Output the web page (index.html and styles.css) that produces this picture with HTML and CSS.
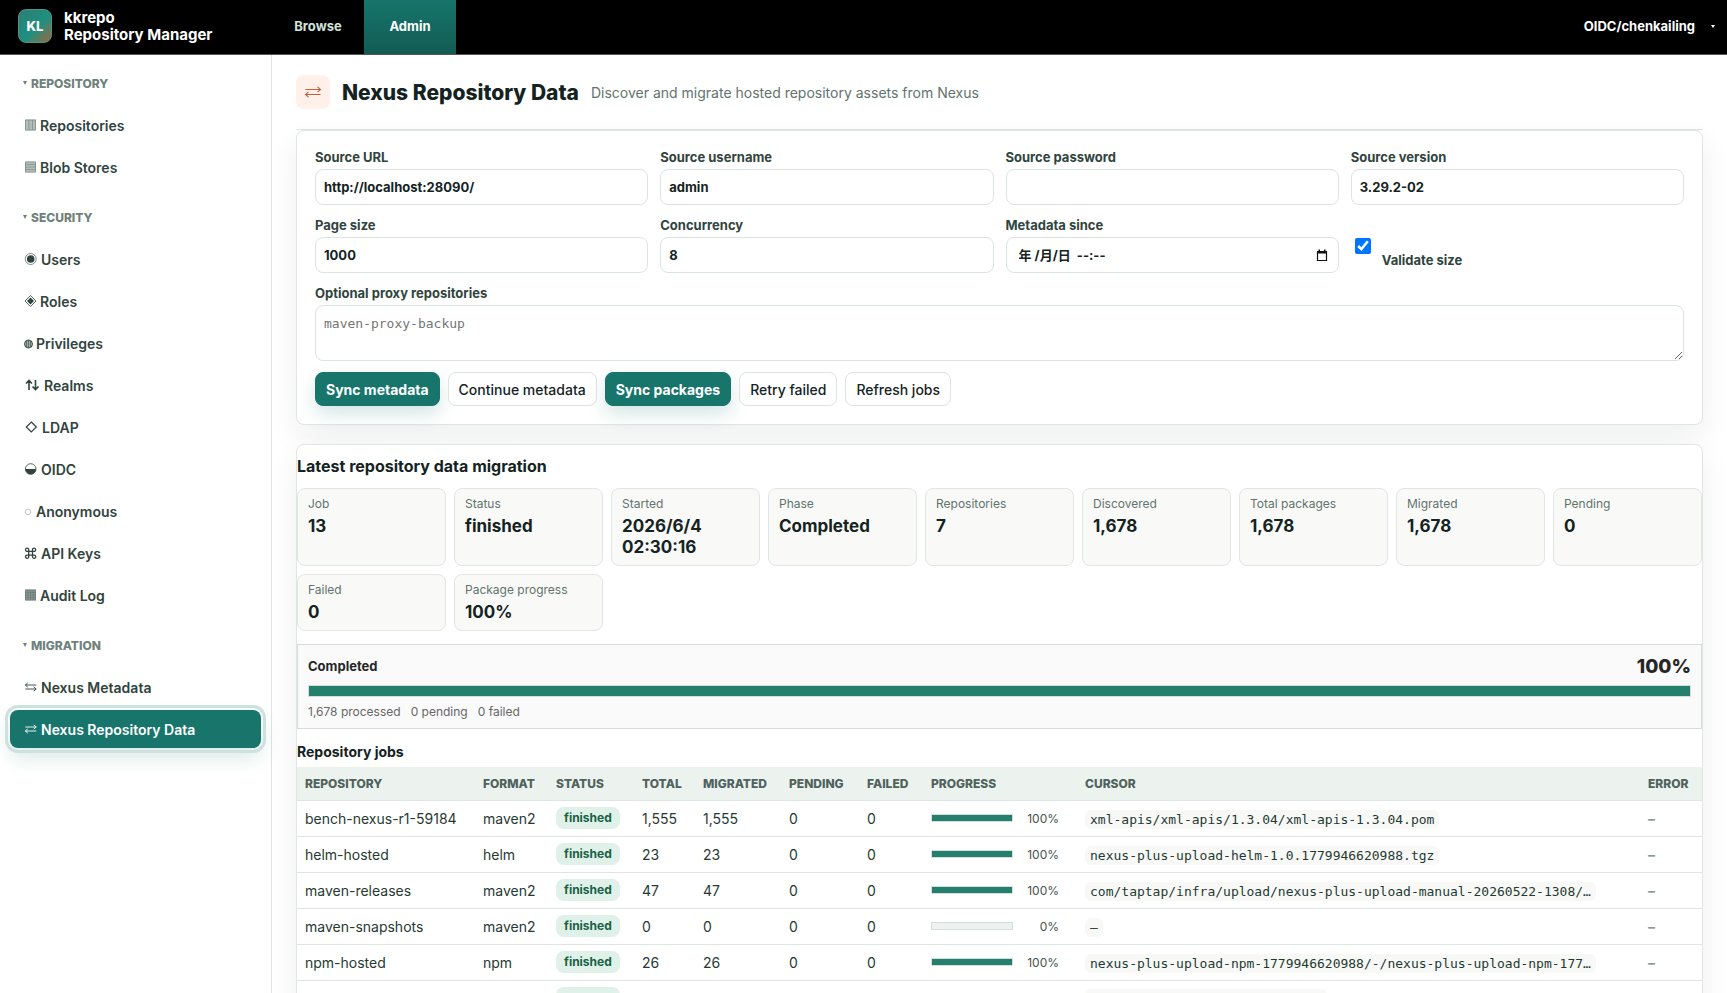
FILE: index.html
```html
<!DOCTYPE html>
<html lang="en">
<head>
<meta charset="utf-8">
<title>kkrepo Repository Manager</title>
<link rel="stylesheet" href="styles.css">
</head>
<body>
<header class="topbar">
  <div class="brand">
    <span class="logo">KL</span>
    <span class="brand-name">kkrepo<br>Repository Manager</span>
  </div>
  <nav class="tabs">
    <a class="tab" href="#browse">Browse</a>
    <a class="tab tab-active" href="#admin">Admin</a>
  </nav>
  <button class="user" type="button">OIDC/chenkailing
    <svg class="user-caret" viewBox="0 0 4 4"><path d="M0 1h4L2 4z" fill="currentColor"/></svg>
  </button>
</header>
<div class="shell">
  <nav class="sidebar">
    <section class="group">
      <h2 class="group-title"><svg class="caret" viewBox="0 0 4 4"><path d="M0 0h4L2 4z" fill="currentColor"/></svg>REPOSITORY</h2>
      <a class="item" href="#repositories"><svg class="icon w12" viewBox="0 0 12 12"><path d="M1 .5h11v11H1z" fill="#b3beba"/><path d="M1.500 1h10v10h-10zM5 1v10M8.500 1v10" fill="none" stroke="#82918c" stroke-width=".8"/></svg>Repositories</a>
      <a class="item" href="#blobs"><svg class="icon w12" viewBox="0 0 12 12"><path d="M1 .5h11v11H1z" fill="#b3beba"/><path d="M1.500 1h10v10h-10zM1 3.500h11M1 6h11M1 8.500h11" fill="none" stroke="#82918c" stroke-width=".8"/></svg>Blob Stores</a>
    </section>
    <section class="group">
      <h2 class="group-title"><svg class="caret" viewBox="0 0 4 4"><path d="M0 0h4L2 4z" fill="currentColor"/></svg>SECURITY</h2>
      <a class="item" href="#users"><svg class="icon w13" viewBox="0 0 13 12"><circle cx="6.700" cy="6" r="5.500" fill="none" stroke="currentColor" stroke-width=".6"/><circle cx="6.700" cy="6" r="3.800" fill="currentColor"/></svg>Users</a>
      <a class="item" href="#roles"><svg class="icon w12" viewBox="0 0 12 12"><path d="M6.500.500 12 6l-5.500 5.500L1 6z" fill="none" stroke="currentColor" stroke-width=".8"/><path d="M6.500 2.500 10 6 6.500 9.500 3 6z" fill="currentColor"/></svg>Roles</a>
      <a class="item" href="#privileges"><svg class="icon w8" viewBox="0 0 8 12"><circle cx="4.500" cy="7" r="4" fill="#a3afab" stroke="currentColor" stroke-width=".9"/><path d="M2.500 4v6M4.500 3v8M6.500 4v6" stroke="currentColor" stroke-width=".6"/></svg>Privileges</a>
      <a class="item" href="#realms"><svg class="icon w16" viewBox="0 0 16 12"><path d="M5 11V1.500M2 4.500l3-3 3 3M11.500 1v9.500M8.500 7.500l3 3 3-3" fill="none" stroke="currentColor" stroke-width="1.600"/></svg>Realms</a>
      <a class="item" href="#ldap"><svg class="icon w14" viewBox="0 0 14 12"><path d="M7.300 1 12.300 6l-5 5-5-5z" fill="none" stroke="currentColor" stroke-width="1.200"/></svg>LDAP</a>
      <a class="item" href="#oidc"><svg class="icon w13" viewBox="0 0 13 12"><circle cx="6.700" cy="6" r="5.300" fill="none" stroke="currentColor" stroke-width=".8"/><path d="M1.400 6h10.600a5.300 5.300 0 0 1-10.600 0z" fill="currentColor"/></svg>OIDC</a>
      <a class="item" href="#anonymous"><svg class="icon w8" viewBox="0 0 8 12"><circle cx="4" cy="7" r="2.800" fill="none" stroke="#b5bfbc" stroke-width=".9"/></svg>Anonymous</a>
      <a class="item" href="#keys"><svg class="icon w13" viewBox="0 0 13 12"><path d="M4.700 4.300v3.900M8.500 4.300v3.900M4.700 4.300h3.800M4.700 8.100h3.800M4.700 4.300H3.200a1.600 1.600 0 1 1 1.500-1.600zM8.500 4.300h1.500a1.600 1.600 0 1 0-1.500-1.600zM4.700 8.100H3.200a1.600 1.600 0 1 0 1.500 1.600zM8.500 8.100h1.500a1.600 1.600 0 1 1-1.500 1.600z" fill="none" stroke="currentColor" stroke-width="1.300"/></svg>API Keys</a>
      <a class="item" href="#audit"><svg class="icon w12" viewBox="0 0 12 12"><path d="M1 .5h11v11H1z" fill="#8b9995"/><path d="M1.500 1h10v10h-10zM4 1v10M6.500 1v10M9 1v10M1 3.500h11M1 6h11M1 8.500h11" fill="none" stroke="#65766f" stroke-width=".6"/></svg>Audit Log</a>
    </section>
    <section class="group">
      <h2 class="group-title"><svg class="caret" viewBox="0 0 4 4"><path d="M0 0h4L2 4z" fill="currentColor"/></svg>MIGRATION</h2>
      <a class="item" href="#metadata"><svg class="icon w13" viewBox="0 0 13 12"><path d="M1.300 4h11M3.800 1.800 1.300 4l2.500 2.200M12 8H1.300M9.700 5.800 12.200 8l-2.500 2.200" fill="none" stroke="currentColor" stroke-width=".9"/></svg>Nexus Metadata</a>
      <a class="item item-active" href="#data"><svg class="icon w13" viewBox="0 0 13 12"><path d="M1.300 4h10.800M9.700 1.800 12.200 4 9.700 6.200M12.300 8H1.300M3.800 5.800 1.300 8l2.500 2.200" fill="none" stroke="currentColor" stroke-width=".9"/></svg>Nexus Repository Data</a>
    </section>
  </nav>
  <main class="main">
    <div class="page-head">
      <span class="page-icon"><svg viewBox="0 0 18 12"><path d="M1.500 3.500h15M13.500.800l3 2.700-3 2.700M16.500 8.500h-15M4.500 5.800l-3 2.700 3 2.700" fill="none" stroke="currentColor" stroke-width="1.100"/></svg></span>
      <h1 class="page-title">Nexus Repository Data</h1>
      <p class="page-sub">Discover and migrate hosted repository assets from Nexus</p>
    </div>
    <form class="card form">
      <div class="fields">
        <label class="field">Source URL<input class="box" type="text" value="http://localhost:28090/"></label>
        <label class="field">Source username<input class="box" type="text" value="admin"></label>
        <label class="field">Source password<input class="box" type="password"></label>
        <label class="field">Source version<input class="box" type="text" value="3.29.2-02"></label>
        <label class="field">Page size<input class="box" type="text" value="1000"></label>
        <label class="field">Concurrency<input class="box" type="text" value="8"></label>
        <div class="field">
          <label for="since">Metadata since</label>
          <div class="box date-box">
            <input class="date-text" id="since" type="text" value="年 /月/日  --:--">
            <button class="date-btn" type="button" aria-label="Open calendar"><svg viewBox="0 0 12 13"><path d="M1.500 3h9v8.500h-9z" fill="none" stroke="#111" stroke-width="1.200"/><path d="M1 2h10v2.500H1zM2.500.500h1.500V2H2.500zM8 .5h1.500V2H8z" fill="#111"/></svg></button>
          </div>
        </div>
        <div class="check">
          <input class="check-box" id="validate" type="checkbox" checked>
          <label class="check-label" for="validate">Validate size</label>
        </div>
        <label class="field field-wide">Optional proxy repositories<textarea class="box area" placeholder="maven-proxy-backup"></textarea></label>
      </div>
      <div class="actions">
        <button class="btn btn-primary" type="button">Sync metadata</button>
        <button class="btn" type="button">Continue metadata</button>
        <button class="btn btn-primary" type="button">Sync packages</button>
        <button class="btn" type="button">Retry failed</button>
        <button class="btn" type="button">Refresh jobs</button>
      </div>
    </form>
    <section class="card report">
      <h2 class="report-title">Latest repository data migration</h2>
      <div class="stats">
        <div class="stat"><span class="stat-label">Job</span><strong class="stat-value">13</strong></div>
        <div class="stat"><span class="stat-label">Status</span><strong class="stat-value">finished</strong></div>
        <div class="stat"><span class="stat-label">Started</span><strong class="stat-value">2026/6/4 02:30:16</strong></div>
        <div class="stat"><span class="stat-label">Phase</span><strong class="stat-value">Completed</strong></div>
        <div class="stat"><span class="stat-label">Repositories</span><strong class="stat-value">7</strong></div>
        <div class="stat"><span class="stat-label">Discovered</span><strong class="stat-value">1,678</strong></div>
        <div class="stat"><span class="stat-label">Total packages</span><strong class="stat-value">1,678</strong></div>
        <div class="stat"><span class="stat-label">Migrated</span><strong class="stat-value">1,678</strong></div>
        <div class="stat"><span class="stat-label">Pending</span><strong class="stat-value">0</strong></div>
        <div class="stat"><span class="stat-label">Failed</span><strong class="stat-value">0</strong></div>
        <div class="stat"><span class="stat-label">Package progress</span><strong class="stat-value">100%</strong></div>
      </div>
      <div class="progress-box">
        <div class="progress-head"><strong>Completed</strong><strong class="progress-pct">100%</strong></div>
        <div class="bar"><div class="bar-fill" style="width:100%"></div></div>
        <div class="progress-foot"><span>1,678 processed</span><span>0 pending</span><span>0 failed</span></div>
      </div>
      <h3 class="jobs-title">Repository jobs</h3>
      <table class="jobs">
        <colgroup><col class="c-repo"><col class="c-format"><col class="c-status"><col class="c-total"><col class="c-migrated"><col class="c-pending"><col class="c-failed"><col class="c-progress"><col><col class="c-error"></colgroup>
        <thead>
          <tr><th>REPOSITORY</th><th>FORMAT</th><th>STATUS</th><th>TOTAL</th><th>MIGRATED</th><th>PENDING</th><th>FAILED</th><th>PROGRESS</th><th>CURSOR</th><th>ERROR</th></tr>
        </thead>
        <tbody>
          <tr><td>bench-nexus-r1-59184</td><td>maven2</td><td><span class="pill">finished</span></td><td>1,555</td><td>1,555</td><td>0</td><td>0</td><td><div class="meter"><div class="bar bar-small"><div class="bar-fill" style="width:100%"></div></div><span>100%</span></div></td><td><code class="cursor">xml-apis/xml-apis/1.3.04/xml-apis-1.3.04.pom</code></td><td class="none">–</td></tr>
          <tr><td>helm-hosted</td><td>helm</td><td><span class="pill">finished</span></td><td>23</td><td>23</td><td>0</td><td>0</td><td><div class="meter"><div class="bar bar-small"><div class="bar-fill" style="width:100%"></div></div><span>100%</span></div></td><td><code class="cursor">nexus-plus-upload-helm-1.0.1779946620988.tgz</code></td><td class="none">–</td></tr>
          <tr><td>maven-releases</td><td>maven2</td><td><span class="pill">finished</span></td><td>47</td><td>47</td><td>0</td><td>0</td><td><div class="meter"><div class="bar bar-small"><div class="bar-fill" style="width:100%"></div></div><span>100%</span></div></td><td><code class="cursor">com/taptap/infra/upload/nexus-plus-upload-manual-20260522-1308/…</code></td><td class="none">–</td></tr>
          <tr><td>maven-snapshots</td><td>maven2</td><td><span class="pill">finished</span></td><td>0</td><td>0</td><td>0</td><td>0</td><td><div class="meter"><div class="bar bar-small"><div class="bar-fill" style="width:0%"></div></div><span>0%</span></div></td><td><code class="cursor">–</code></td><td class="none">–</td></tr>
          <tr><td>npm-hosted</td><td>npm</td><td><span class="pill">finished</span></td><td>26</td><td>26</td><td>0</td><td>0</td><td><div class="meter"><div class="bar bar-small"><div class="bar-fill" style="width:100%"></div></div><span>100%</span></div></td><td><code class="cursor">nexus-plus-upload-npm-1779946620988/-/nexus-plus-upload-npm-177…</code></td><td class="none">–</td></tr>
          <tr><td></td><td></td><td><span class="pill pill-empty"></span></td><td></td><td></td><td></td><td></td><td></td><td><code class="cursor cursor-empty"></code></td><td></td></tr>
        </tbody>
      </table>
    </section>
  </main>
</div>
</body>
</html>
```

FILE: styles.css
```css
* { box-sizing: border-box; }

body {
  margin: 0;
  height: 100vh;
  overflow: hidden;
  display: flex;
  flex-direction: column;
  background: #fff;
  color: #14231f;
  font-family: Inter, "Noto Sans CJK SC", sans-serif;
  font-size: 14px;
}

h1, h2, h3, p { margin: 0; }
a { color: inherit; text-decoration: none; }
button, input, textarea { font: inherit; color: inherit; }

/* Top bar */
.topbar {
  flex: none;
  display: flex;
  height: 55px;
  background: #000;
  border-bottom: 1px solid #555;
  color: #fff;
}
.brand { display: flex; align-items: center; gap: 12px; width: 272px; padding: 0 18px 2px; }
.logo {
  display: flex;
  align-items: center;
  justify-content: center;
  width: 34px;
  height: 34px;
  border: 1px solid #4f9488;
  border-radius: 8px;
  background: linear-gradient(135deg, #2f7d73 0%, #1d9080 55%, #a0673f 100%);
  font-size: 13px;
  font-weight: 800;
}
.brand-name { font-size: 15px; font-weight: 700; line-height: 17px; white-space: nowrap; }
.tabs { display: flex; }
.tab {
  display: flex;
  align-items: center;
  justify-content: center;
  width: 92px;
  padding-bottom: 2px;
  color: #d3e0dc;
  font-size: 13px;
  font-weight: 700;
}
.tab-active { background: linear-gradient(#17756b, #125c53); color: #fff; }
.user {
  display: flex;
  align-items: center;
  gap: 16px;
  margin-left: auto;
  padding: 0 12px 2px;
  border: 0;
  background: none;
  font-size: 13px;
  font-weight: 700;
}
.user-caret { width: 4px; height: 4px; }

/* Side navigation */
.shell { flex: 1; display: flex; min-height: 0; }
.sidebar {
  flex: none;
  width: 272px;
  padding: 18px 10px;
  border-right: 1px solid #dde4e2;
}
.group { display: flex; flex-direction: column; gap: 4px; margin-bottom: 21px; }
.group-title {
  display: flex;
  align-items: center;
  gap: 4px;
  height: 20px;
  margin-bottom: 9px;
  padding-left: 13px;
  color: #6f817b;
  font-size: 12px;
  font-weight: 800;
}
.caret { width: 4px; height: 4px; }
.item {
  display: flex;
  align-items: center;
  gap: 4px;
  height: 38px;
  padding-left: 14px;
  border-radius: 8px;
  color: #30443e;
  font-weight: 600;
}
.item-active {
  background: #17756b;
  color: #fff;
  outline: 3px solid #cfe1de;
  outline-offset: 2px;
  box-shadow: 0 10px 20px rgba(23, 117, 107, .16);
}
.icon { flex: none; height: 12px; overflow: visible; }
.w8 { width: 8px; }
.w12 { width: 12px; }
.w13 { width: 13px; }
.w14 { width: 14px; }
.w16 { width: 16px; }

/* Page */
.main { flex: 1; min-width: 0; padding: 20px 24px; }
.page-head {
  display: flex;
  align-items: center;
  gap: 12px;
  height: 55px;
  padding-bottom: 20px;
  border-bottom: 1px solid #dde4e2;
}
.page-icon {
  display: flex;
  align-items: center;
  justify-content: center;
  width: 34px;
  height: 34px;
  border-radius: 8px;
  background: #fff0e9;
  color: #c4603f;
}
.page-icon svg { width: 18px; height: 12px; }
.page-title { font-size: 21px; font-weight: 800; }
.page-sub { color: #61736d; }
.card {
  border: 1px solid #dfe6e4;
  border-radius: 8px;
  background: #fff;
  box-shadow: 0 12px 30px rgba(20, 35, 31, .07);
}

/* Source form */
.form { margin-bottom: 19px; padding: 18px; }
.fields { display: grid; grid-template-columns: repeat(4, 1fr); gap: 12px; }
.field {
  display: flex;
  flex-direction: column;
  gap: 4px;
  color: #30443e;
  font-size: 13px;
  font-weight: 700;
  line-height: 16px;
}
.field-wide { grid-column: 1 / -1; }
.box {
  width: 100%;
  height: 36px;
  padding: 0 8px;
  border: 1px solid #dce4e1;
  border-radius: 8px;
  background: #fff;
  color: #14231f;
}
.date-box { display: flex; align-items: center; padding: 0 10px 0 12px; }
.date-text { flex: 1; min-width: 0; padding: 0; border: 0; background: none; }
.date-btn { display: flex; padding: 0; border: 0; background: none; }
.date-btn svg { width: 12px; height: 13px; }
.area {
  display: block;
  height: 56px;
  padding: 10px 8px;
  font-family: "DejaVu Sans Mono", monospace;
  font-weight: 400;
}
.area::placeholder { color: #757575; }
.check { display: flex; align-items: flex-start; gap: 11px; padding: 21px 4px 0; }
.check-box { width: 16px; height: 16px; margin: 0; accent-color: #0075ff; }
.check-label { padding-top: 14px; color: #30443e; font-size: 13px; font-weight: 700; line-height: 16px; }
.actions { display: flex; gap: 8px; margin-top: 11px; }
.btn {
  height: 34px;
  padding: 0 10px;
  border: 1px solid #dce4e1;
  border-radius: 8px;
  background: #fff;
  font-weight: 500;
}
.btn-primary {
  border-color: #17756b;
  background: #17756b;
  color: #fff;
  font-weight: 700;
  box-shadow: 0 8px 18px rgba(23, 117, 107, .18);
}

/* Migration report */
.report-title { padding: 11px 0 12px; font-size: 16px; line-height: 20px; }
.stats { display: grid; grid-template-columns: repeat(auto-fill, minmax(140px, 1fr)); gap: 8px; }
.stat {
  display: flex;
  flex-direction: column;
  gap: 4px;
  padding: 7px 10px;
  border: 1px solid #dfe6e3;
  border-radius: 8px;
  background: #f9faf8;
}
.stat-label { color: #61736d; font-size: 12px; line-height: 16px; }
.stat-value { font-size: 17px; line-height: 21px; }
.progress-box {
  margin-top: 13px;
  padding: 10px 10px 8px;
  border: 1px solid #d6dcda;
  background: #fafafa;
  color: #262626;
}
.progress-head {
  display: flex;
  align-items: center;
  justify-content: space-between;
  height: 22px;
  font-size: 13px;
}
.progress-pct { font-size: 19px; font-weight: 800; }
.bar { height: 12px; margin: 8px 0 7px; border: 1px solid #d5dedb; background: #edf2f0; }
.bar-fill { height: 100%; background: #257f6d; }
.progress-foot { display: flex; gap: 10px; color: #666; font-size: 12px; line-height: 16px; }
.jobs-title { padding: 14px 0 6px; font-size: 14px; line-height: 18px; }
.jobs { width: 100%; table-layout: fixed; border-collapse: collapse; }
.c-repo { width: 178px; }
.c-format { width: 73px; }
.c-status { width: 86px; }
.c-total { width: 61px; }
.c-migrated { width: 86px; }
.c-pending { width: 78px; }
.c-failed { width: 64px; }
.c-progress { width: 154px; }
.c-error { width: 62px; }
.jobs th, .jobs td { padding: 0 8px; border-bottom: 1px solid #dfe5e3; text-align: left; white-space: nowrap; }
.jobs th {
  height: 33px;
  background: #ecf3ef;
  color: #4f625c;
  font-size: 12px;
  font-weight: 800;
}
.jobs td { height: 36px; color: #263a34; }
.jobs .none { color: #8b9995; font-weight: 700; }
.pill {
  display: inline-block;
  padding: 3px 8px;
  border-radius: 8px;
  background: #e0f1e9;
  color: #166246;
  font-size: 12px;
  font-weight: 700;
  line-height: 16px;
}
.pill-empty { width: 64px; height: 22px; vertical-align: middle; }
.meter { display: flex; align-items: center; justify-content: space-between; width: 128px; font-size: 12px; color: #41534d; }
.bar-small { width: 82px; height: 8px; margin: 0; }
.cursor {
  padding: 2px 5px;
  border-radius: 6px;
  background: #f8f9f7;
  color: #1f3a33;
  font-family: "DejaVu Sans Mono", monospace;
  font-size: 13px;
}
.cursor-empty { display: inline-block; width: 242px; height: 19px; vertical-align: middle; }
```
